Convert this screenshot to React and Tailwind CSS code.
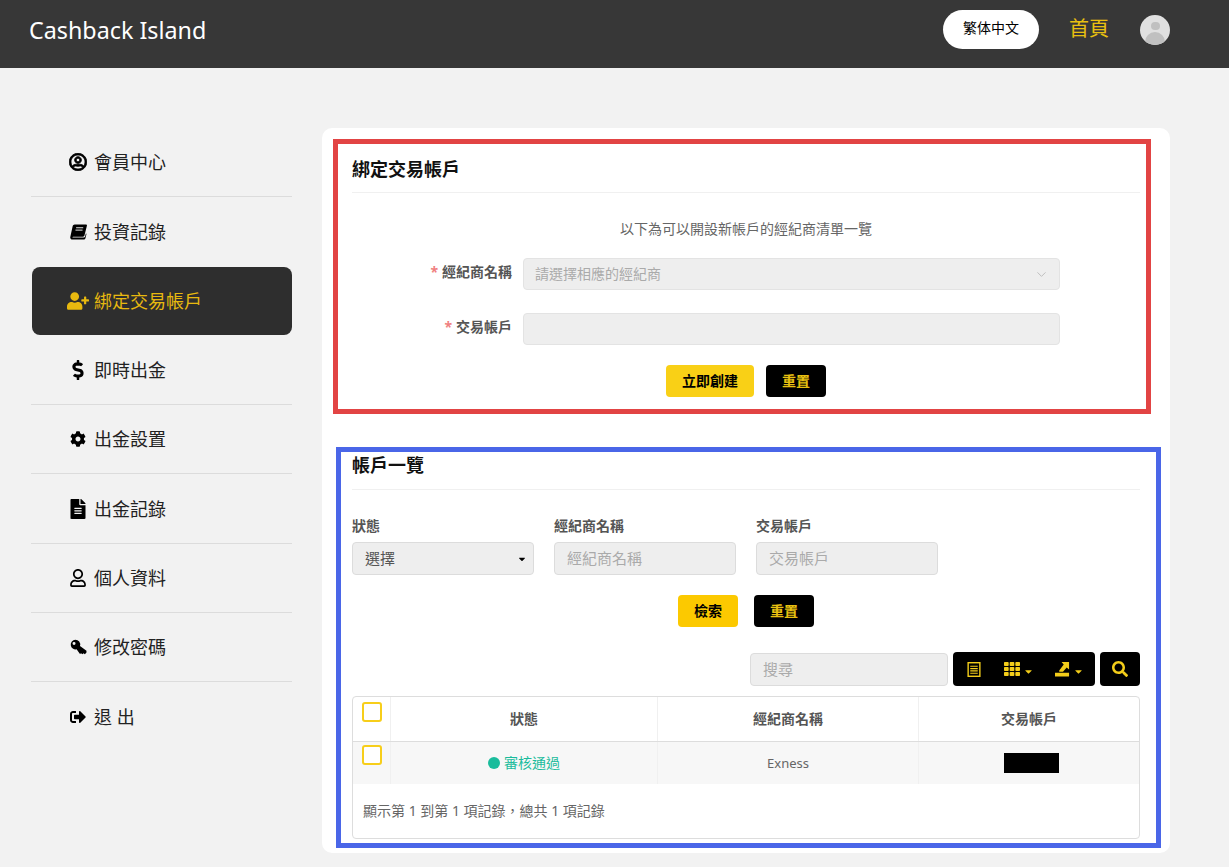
import React from 'react';
import {
  FaRegUserCircle,
  FaUserPlus,
  FaDollarSign,
  FaCog,
  FaFileAlt,
  FaRegUser,
  FaSignOutAlt,
  FaTh,
  FaSearch,
  FaCaretDown,
} from 'react-icons/fa';
import { LuChevronDown } from 'react-icons/lu';

const font = "font-['Noto_Sans','Noto_Sans_CJK_TC',sans-serif]";

const BookIcon = ({ className }) => (
  <svg viewBox="0 0 18 16" className={className} fill="currentColor">
    <path d="M5 0h12c.8 0 1.1.6.9 1.3l-2.6 10.5c-.2.7-.7 1.2-1.5 1.2H3.4c-.9 0-1.1.9-.3.9h11.6c.6 0 1-.4 1.2-.9l.9-3.5.7.4-1 4.2c-.2.9-.9 1.9-2 1.9H2.6C1 16 0 14.8 .3 13.3L2.8 2C3.1.8 3.9 0 5 0z" />
    <path d="M6.5 3.5h7.5M5.8 6h7.5" stroke="#f2f2f2" strokeWidth="1" fill="none" />
  </svg>
);

const KeyIcon = ({ className }) => (
  <svg viewBox="0 0 16 16" className={className} fill="currentColor">
    <path
      fillRule="evenodd"
      d="M5 .6a4.6 4.6 0 0 1 4.4 5.9L15.500 11v1.800L14 14.300l-1.300-1-1 1-1.300-1-1 .7-3.200-4.300A4.600 4.600 0 1 1 5 .6zM3.800 2.800a1.400 1.400 0 1 0 0 2.800 1.400 1.400 0 0 0 0-2.800z"
    />
  </svg>
);

// narrow list sheet used in the table toolbar
const ListIcon = ({ className }) => (
  <svg viewBox="0 0 14 16" className={className} fill="none" stroke="currentColor">
    <rect x="0.75" y="0.75" width="12.5" height="14.5" strokeWidth="1.500" />
    <path d="M3 4.500h8M3 7.000h8M3 9.500h8M3 12h8" strokeWidth="1.200" />
  </svg>
);

// export arrow over a tray, as in the table toolbar
const ExportIcon = ({ className }) => (
  <svg viewBox="0 0 16 16" className={className} fill="currentColor">
    <path d="M0 12h15v4H0z" />
    <path d="M7 .5h8v8l-2.500-2.200L8.500 11H4.500V9.500L9.300 3.200z" />
  </svg>
);

const menu = [
  { label: '會員中心', icon: <FaRegUserCircle className="w-[18px] h-[18px] stroke-current stroke-[24]" />, line: true },
  { label: '投資記錄', icon: <BookIcon className="w-[17px] h-4" /> },
  { label: '綁定交易帳戶', icon: <FaUserPlus className="w-[22px] h-[18px]" />, active: true },
  { label: '即時出金', icon: <FaDollarSign className="w-[18px] h-5" />, line: true },
  { label: '出金設置', icon: <FaCog className="w-4 h-4" />, line: true },
  { label: '出金記錄', icon: <FaFileAlt className="w-4 h-5" />, line: true },
  { label: '個人資料', icon: <FaRegUser className="w-[18px] h-[18px]" />, line: true },
  { label: '修改密碼', icon: <KeyIcon className="w-[17px] h-[17px]" />, line: true },
  { label: '退 出', icon: <FaSignOutAlt className="w-4 h-4" /> },
];

const Label = ({ children }) => (
  <div className="text-sm font-bold text-[#555] leading-[20px] mb-[6px]">{children}</div>
);

const Checkbox = () => (
  <div className="w-5 h-5 rounded-[3px] border-2 border-[#f7ce1a] bg-white" />
);

export default function App() {
  return (
    <div className={`${font} relative min-h-[867px] h-[867px] overflow-hidden bg-[#f2f2f2]`}>
      <header className="h-[68px] bg-[#373737] flex items-center pl-[29px] pr-[59px]">
        <div className="text-white text-[23.3px] leading-none pb-[6px]">Cashback Island</div>
        <div className="ml-auto flex items-center pb-[9px]">
          <button className="w-24 h-[39px] bg-white rounded-[20px] text-[14px] text-black pb-1">繁体中文</button>
          <a className="ml-[30px] text-xl text-[#e8c010] mb-[2px]">首頁</a>
          <div className="ml-[31px] w-[30px] h-[30px] rounded-full bg-[#e0e0e0] overflow-hidden flex flex-col items-center">
            <div className="mt-[7px] w-[9px] h-[9px] rounded-full bg-[#c0c0c0]" />
            <div className="mt-[2px] w-[20px] h-[14px] rounded-t-full bg-[#c0c0c0]" />
          </div>
        </div>
      </header>

      <div className="flex pl-[31px] pt-[60px]">
        <nav className="w-[261px] shrink-0">
          {menu.map((m) => (
            <div
              key={m.label}
              className={`h-[69.3px] flex ${m.line ? 'border-b border-[#dcdcdc]' : ''} ${m.active ? 'pb-px pl-px' : ''}`}
            >
              <div
                className={`flex-1 flex items-center text-lg ${
                  m.active ? 'bg-[#2e2e2e] rounded-lg text-[#e8b90f] pl-[34px]' : 'text-[#222] pl-[35px]'
                }`}
              >
                <span className={`w-[26px] flex justify-center -ml-[1px] ${m.active ? '' : 'text-black'}`}>{m.icon}</span>
                <span className="ml-[3px]">{m.label}</span>
              </div>
            </div>
          ))}
        </nav>

        <main className="ml-[30px] w-[848px] h-[725px] bg-white rounded-[10px] px-[30px] pt-[20px]">
          <section>
            <h2 className="text-[18px] font-bold text-[#111] leading-[42px] h-[45px] border-b border-[#f0f0f0]">綁定交易帳戶</h2>
            <p className="mt-[26px] text-center text-sm text-[#666] leading-[20px]">以下為可以開設新帳戶的經紀商清單一覽</p>
            <div className="mt-[19px] flex items-center">
              <label className="w-[160px] text-right text-sm font-bold text-[#555] pb-[5px]">
                <span className="text-[#f08080] mr-[4px]">*</span>經紀商名稱
              </label>
              <div className="ml-[11px] w-[537px] h-8 rounded-[4px] border border-[#e3e3e3] bg-[#eee] flex items-center justify-between pl-[11px] pr-[10px] text-sm text-[#aaa]">
                請選擇相應的經紀商
                <LuChevronDown className="w-[15px] h-[15px] text-[#bbb] stroke-[1.5]" />
              </div>
            </div>
            <div className="mt-[23px] flex items-center">
              <label className="w-[160px] text-right text-sm font-bold text-[#555] pb-[5px]">
                <span className="text-[#f08080] mr-[4px]">*</span>交易帳戶
              </label>
              <div className="ml-[11px] w-[537px] h-8 rounded-[4px] border border-[#e3e3e3] bg-[#eee]" />
            </div>
            <div className="mt-5 flex justify-center gap-3">
              <button className="w-[88px] h-8 rounded-[4px] bg-[#f9d016] text-sm font-bold text-black">立即創建</button>
              <button className="w-[60px] h-8 rounded-[4px] bg-black text-sm font-bold text-[#e8c010]">重置</button>
            </div>
          </section>

          <section className="mt-[54px]">
            <h2 className="text-[18px] font-bold text-[#111] leading-[26px] h-[39px] border-b border-[#f0f0f0] pt-[1px]">帳戶一覽</h2>
            <div className="mt-[26px] flex gap-5">
              {['狀態', '經紀商名稱', '交易帳戶'].map((t, i) => (
                <div key={t} className="w-[182px]">
                  <Label>{t}</Label>
                  {i === 0 ? (
                    <div className="h-[33px] rounded-[4px] border border-[#dcdcdc] bg-[#eee] flex items-center justify-between pl-3 pr-[6px] text-[15px] text-[#555]">
                      選擇
                      <FaCaretDown className="w-[10px] h-[10px] text-black" />
                    </div>
                  ) : (
                    <div className="h-[33px] rounded-[4px] border border-[#dcdcdc] bg-[#eee] flex items-center pl-3 text-[15px] text-[#aaa]">{t}</div>
                  )}
                </div>
              ))}
            </div>
            <div className="mt-5 flex justify-center gap-4">
              <button className="w-[60px] h-8 rounded-[4px] bg-[#fcc900] text-sm font-bold text-black">檢索</button>
              <button className="w-[60px] h-8 rounded-[4px] bg-black text-sm font-bold text-[#e8c010]">重置</button>
            </div>
            <div className="mt-[25px] flex justify-end items-center">
              <div className="w-[198px] h-[33px] rounded-[4px] border border-[#dcdcdc] bg-[#eee] flex items-center pl-3 text-[15px] text-[#aaa]">搜尋</div>
              <div className="ml-[5px] w-[142px] h-[34px] rounded-[4px] bg-black text-[#f3cd1a] flex items-center pl-[14px]">
                <ListIcon className="w-[14px] h-[15px]" />
                <FaTh className="ml-[23px] w-4 h-4" />
                <FaCaretDown className="ml-[3px] w-[11px] h-[11px] mt-1" />
                <ExportIcon className="ml-[21px] w-[15px] h-4" />
                <FaCaretDown className="ml-[3px] w-[11px] h-[11px] mt-1" />
              </div>
              <div className="ml-[5px] w-10 h-[34px] rounded-[4px] bg-black text-[#f3cd1a] flex items-center justify-center">
                <FaSearch className="w-4 h-4" />
              </div>
            </div>
            <div className="mt-[10px] h-[143px] border border-[#ddd] rounded-[4px] overflow-hidden text-sm">
              <div className="flex h-[45px] border-b border-[#ddd] text-[#555] font-bold">
                <div className="w-[38px] border-r border-[#f0f0f0] pl-[9px] pt-[5px]"><Checkbox /></div>
                <div className="w-[267px] border-r border-[#f0f0f0] flex items-center justify-center">狀態</div>
                <div className="w-[261px] border-r border-[#f0f0f0] flex items-center justify-center">經紀商名稱</div>
                <div className="flex-1 flex items-center justify-center">交易帳戶</div>
              </div>
              <div className="flex h-[42px] bg-[#f7f7f7] text-[#666]">
                <div className="w-[38px] border-r border-[#f0f0f0] pl-[9px] pt-[3px]"><Checkbox /></div>
                <div className="w-[267px] border-r border-[#f0f0f0] flex items-center justify-center text-[#1abc9c]">
                  <span className="w-3 h-3 rounded-full bg-[#1abc9c] mr-1" />審核通過
                </div>
                <div className="w-[261px] border-r border-[#f0f0f0] flex items-center justify-center text-[13px]">Exness</div>
                <div className="flex-1 flex items-center justify-center pl-[4px]">
                  <div className="w-[55px] h-5 bg-black" />
                </div>
              </div>
              <div className="pl-[10px] pt-[18px] text-[#666] leading-[18px]">顯示第 1 到第 1 項記錄，總共 1 項記錄</div>
            </div>
          </section>
        </main>
      </div>

      <div className="absolute left-[333px] top-[139px] w-[818px] h-[275px] border-[5px] border-[#e24444] pointer-events-none" />
      <div className="absolute left-[336px] top-[447px] w-[825px] h-[401px] border-[5px] border-[#4a66e8] pointer-events-none" />
    </div>
  );
}
